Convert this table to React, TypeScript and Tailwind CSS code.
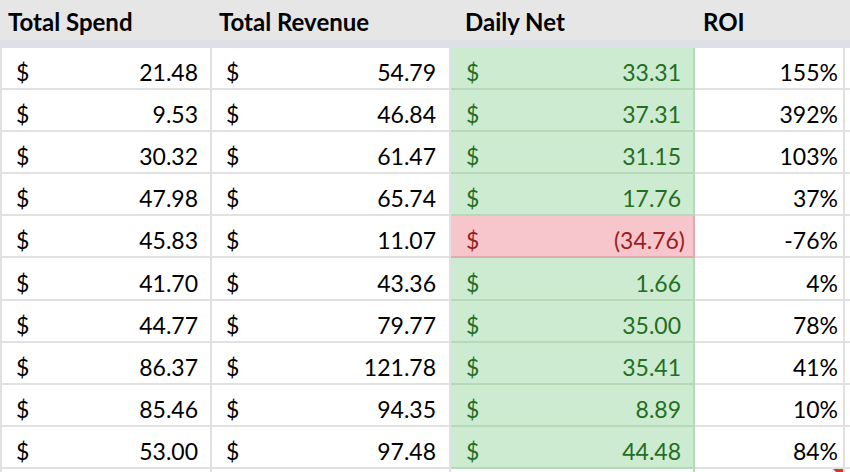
const rows = [
  { spend: "21.48", rev: "54.79", net: "33.31", roi: "155%" },
  { spend: "9.53", rev: "46.84", net: "37.31", roi: "392%" },
  { spend: "30.32", rev: "61.47", net: "31.15", roi: "103%" },
  { spend: "47.98", rev: "65.74", net: "17.76", roi: "37%" },
  { spend: "45.83", rev: "11.07", net: "(34.76)", roi: "-76%", loss: true },
  { spend: "41.70", rev: "43.36", net: "1.66", roi: "4%" },
  { spend: "44.77", rev: "79.77", net: "35.00", roi: "78%" },
  { spend: "86.37", rev: "121.78", net: "35.41", roi: "41%" },
  { spend: "85.46", rev: "94.35", net: "8.89", roi: "10%" },
  { spend: "53.00", rev: "97.48", net: "44.48", roi: "84%" },
];

const font = { fontFamily: "Lato, 'Open Sans', sans-serif" };

export default function App() {
  return (
    <div className="w-[850px] h-[472px] overflow-hidden bg-white text-[23px] leading-none text-black" style={font}>
      {/* column headers */}
      <div className="flex h-[40px] items-end bg-[#e6e6e6] pb-[6px] text-[24px] font-bold">
        <div className="w-[212px] pl-[8px]">Total Spend</div>
        <div className="w-[239px] pl-[7px]">Total Revenue</div>
        <div className="w-[244px] pl-[14px]">Daily Net</div>
        <div className="w-[155px] pl-[8px]">ROI</div>
      </div>
      <div className="h-[8px] bg-[#dde1e7]" />

      {rows.map((r, i) => (
        <div key={i} className="flex h-[42.1px]">
          <div className="flex w-[212px] items-end justify-between border-b-2 border-l-2 border-r-2 border-[#e1e1e1] pb-[4px] pl-[14px] pr-[12px]">
            <span>$</span>
            <span>{r.spend}</span>
          </div>
          <div className="flex w-[239px] items-end justify-between border-b-2 border-r-2 border-[#e1e1e1] pb-[4px] pl-[14px] pr-[13px]">
            <span>$</span>
            <span>{r.rev}</span>
          </div>
          {r.loss ? (
            <div className="flex w-[244px] items-end justify-between border-b-2 border-r-2 border-[#e3a9b0] bg-[#f6c6cc] pb-[4px] pl-[15px] pr-[8px] text-[#9c1b1b]">
              <span>$</span>
              <span>{r.net}</span>
            </div>
          ) : (
            <div className="flex w-[244px] items-end justify-between border-b-2 border-r-2 border-[#b4dab7] bg-[#cdebd1] pb-[4px] pl-[15px] pr-[12px] text-[#226e22]">
              <span>$</span>
              <span>{r.net}</span>
            </div>
          )}
          <div className="flex w-[150px] items-end justify-end border-b-2 border-r-2 border-[#e1e1e1] pb-[4px] pr-[5px]">
            {r.roi}
          </div>
          <div className="w-[5px] border-b-2 border-[#e1e1e1]" />
        </div>
      ))}

      {/* partially visible next row */}
      <div className="flex h-[20px]">
        <div className="w-[212px] border-l-2 border-r-2 border-[#e1e1e1]" />
        <div className="w-[239px] border-r-2 border-[#e1e1e1]" />
        <div className="w-[244px] border-r-2 border-[#b4dab7]" />
        <div className="relative w-[150px] border-r-2 border-[#e1e1e1]">
          <div className="absolute right-0 top-0 h-0 w-0 border-l-[10px] border-t-[10px] border-l-transparent border-t-[#d9352b]" />
        </div>
      </div>
    </div>
  );
}
